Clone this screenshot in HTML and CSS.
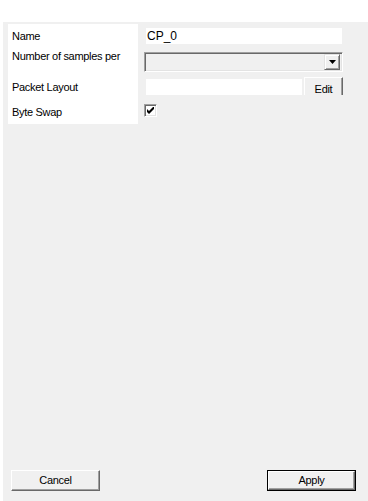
FILE: index.html
```html
<!DOCTYPE html>
<html>
<head>
<meta charset="utf-8">
<link rel="stylesheet" href="styles.css">
</head>
<body>
<div class="panel">
  <div class="form">
    <div class="lbl r1">Name</div>
    <div class="ctl r1"><div class="textbox name">CP_0</div></div>
    <div class="lbl r2 top">Number of samples per</div>
    <div class="ctl r2">
      <div class="combo">
        <div class="combo-btn">
          <svg width="7" height="4" viewBox="0 0 7 4"><path d="M0 0H7L3.5 4Z" fill="#000"/></svg>
        </div>
      </div>
    </div>
    <div class="lbl r3">Packet Layout</div>
    <div class="ctl r3">
      <div class="textbox layout"></div>
      <div class="edit-clip"><div class="btn edit">Edit</div></div>
    </div>
    <div class="lbl r4">Byte Swap</div>
    <div class="ctl r4">
      <div class="check">
        <svg width="7" height="7" viewBox="0 0 7 7"><path d="M0 2L2 4L7 -1V2L2 7L0 5Z" fill="#000"/></svg>
      </div>
    </div>
  </div>
  <div class="footer">
    <div class="btn cancel">Cancel</div>
    <div class="btn apply"><div class="apply-in">Apply</div></div>
  </div>
</div>
</body>
</html>
```
FILE: styles.css
```css
html, body {
  margin: 0;
  padding: 0;
  background: #fff;
}
body {
  font-family: "Liberation Sans", Arial, sans-serif;
  font-size: 11px;
  letter-spacing: -0.3px;
  color: #000;
}
.panel {
  margin: 22px 0 0 3px;
  height: 479px;
  background: #f0f0f0;
  display: flex;
  flex-direction: column;
  justify-content: space-between;
}
.form {
  display: grid;
  grid-template-columns: 130px 199px;
  grid-template-rows: 24px 27px 24px 25px;
  column-gap: 6px;
  margin: 2px 0 0 5px;
}
.lbl {
  background: #fff;
  padding-left: 4px;
  display: flex;
  align-items: center;
}
.lbl.top {
  align-items: flex-start;
  padding-top: 2px;
}
.ctl {
  display: flex;
  align-items: center;
}
.textbox {
  background: #fff;
  height: 16px;
  line-height: 16px;
  margin-left: 2px;
  padding-left: 1px;
  font-size: 12px;
  letter-spacing: 0;
}
.textbox.name {
  width: 195px;
}
.textbox.layout {
  width: 155px;
}
.combo {
  width: 199px;
  height: 20px;
  box-sizing: border-box;
  border-top: 1px solid #a0a0a0;
  border-left: 1px solid #a0a0a0;
  border-bottom: 1px solid #fff;
  border-right: 1px solid #fff;
  box-shadow: inset 1px 1px 0 #696969, inset -1px -1px 0 #e3e3e3;
  display: flex;
  justify-content: flex-end;
  align-items: center;
  padding-right: 2px;
  background: #f0f0f0;
}
.combo-btn {
  width: 16px;
  height: 16px;
  box-sizing: border-box;
  border-top: 1px solid #e3e3e3;
  border-left: 1px solid #e3e3e3;
  border-right: 1px solid #696969;
  border-bottom: 1px solid #696969;
  box-shadow: inset 1px 1px 0 #fff, inset -1px -1px 0 #a0a0a0;
  display: flex;
  align-items: center;
  justify-content: center;
}
.edit-clip {
  margin-left: 2px;
  height: 18px;
  align-self: flex-start;
  margin-top: 2px;
  overflow: hidden;
}
.btn {
  box-sizing: border-box;
  text-align: center;
  background: #f0f0f0;
  font-size: 11px;
}
.btn.edit {
  width: 39px;
  height: 23px;
  border-top: 1px solid #fff;
  border-left: 1px solid #fff;
  border-right: 1px solid #696969;
  box-shadow: inset -1px 0 0 #a0a0a0;
  padding-top: 5px;
}
.check {
  width: 13px;
  height: 13px;
  box-sizing: border-box;
  border-top: 1px solid #a0a0a0;
  border-left: 1px solid #a0a0a0;
  border-bottom: 1px solid #fff;
  border-right: 1px solid #fff;
  box-shadow: inset 1px 1px 0 #696969, inset -1px -1px 0 #e3e3e3;
  background: #fff;
  display: flex;
  align-items: center;
  justify-content: center;
  margin-top: -2px;
}
.footer {
  display: flex;
  justify-content: space-between;
  padding: 0 12px 10px 8px;
}
.cancel {
  width: 89px;
  height: 21px;
  line-height: 19px;
  border-top: 1px solid #fff;
  border-left: 1px solid #fff;
  border-right: 1px solid #696969;
  border-bottom: 1px solid #696969;
  box-shadow: inset -1px -1px 0 #a0a0a0;
}
.apply {
  width: 89px;
  height: 21px;
  border: 1px solid #000;
}
.apply-in {
  height: 19px;
  box-sizing: border-box;
  line-height: 17px;
  border-top: 1px solid #fff;
  border-left: 1px solid #fff;
  border-right: 1px solid #696969;
  border-bottom: 1px solid #696969;
  box-shadow: inset -1px -1px 0 #a0a0a0;
}
```
